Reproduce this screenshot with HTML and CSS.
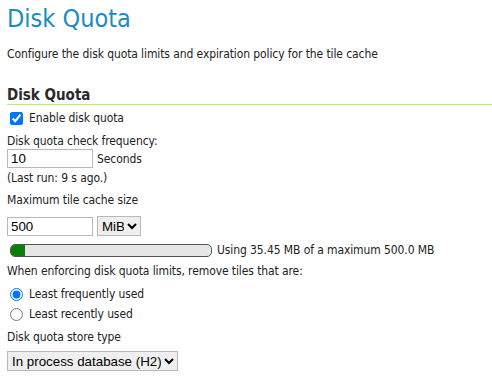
FILE: index.html
```html
<!DOCTYPE html>
<html>
<head>
<meta charset="utf-8">
<link rel="stylesheet" href="styles.css">
</head>
<body>
<div class="page">
  <h1 class="title">Disk Quota</h1>
  <p class="desc">Configure the disk quota limits and expiration policy for the tile cache</p>
  <h2 class="section">Disk Quota</h2>
  <div class="form">
    <label class="check-row"><input type="checkbox" checked> <span>Enable disk quota</span></label>
    <div class="label">Disk quota check frequency:</div>
    <div class="field-row tight"><input class="text" type="text" value="10"> <span>Seconds</span></div>
    <div class="note">(Last run: 9 s ago.)</div>
    <div class="label gap">Maximum tile cache size</div>
    <div class="field-row wide"><input class="text" type="text" value="500"> <select class="unit"><option>MiB</option></select></div>
    <div class="usage">
      <div class="bar"><div class="fill" style="width:7%"></div></div>
      <span>Using 35.45 MB of a maximum 500.0 MB</span>
    </div>
    <div class="label more">When enforcing disk quota limits, remove tiles that are:</div>
    <label class="radio-row first"><input type="radio" name="p" checked> <span>Least frequently used</span></label>
    <label class="radio-row"><input type="radio" name="p"> <span>Least recently used</span></label>
    <div class="label">Disk quota store type</div>
    <div class="field-row store-row"><select class="store"><option>In process database (H2)</option></select></div>
  </div>
</div>
</body>
</html>
```
FILE: styles.css
```css
html, body { margin: 0; padding: 0; background: #fff; }
body {
  font-family: "DejaVu Sans Condensed", "DejaVu Sans", sans-serif;
  font-size: 12px;
  color: #222;
  letter-spacing: -0.1px;
}
.page { padding: 0 0 0 7px; }
.title {
  font-size: 25px;
  font-weight: normal;
  color: #1b8bc2;
  margin: 3px 0 0;
  line-height: 32px;
  letter-spacing: 0;
}
.desc { margin: 11px 0 0; line-height: 16px; }
.section {
  font-size: 15px;
  font-weight: bold;
  color: #2a2a2a;
  margin: 24px 0 0;
  line-height: 18px;
  padding-bottom: 0;
  border-bottom: 1px solid #bfe08e;
  letter-spacing: 0;
}
.form { display: flex; flex-direction: column; align-items: flex-start; }
.check-row, .radio-row { display: flex; align-items: center; gap: 6px; height: 20px; margin-top: 2px; }
.check-row { margin-top: 3px; }
.radio-row.first { margin-top: 5px; }
.radio-row { margin-top: 0; }
.check-row input, .radio-row input { margin: 0 0 0 3px; width: 13px; height: 13px; }
.label { line-height: 16px; margin-top: 5px; }
.label.gap { margin-top: 6px; }
.label.more { margin-top: 6px; }
.field-row { display: flex; align-items: center; gap: 4px; margin-top: 4px; }
.field-row.tight { margin-top: 0; }
.field-row.wide { margin-top: 8px; }
.field-row.store-row { margin-top: 6px; }
.text {
  width: 86px; height: 19px; box-sizing: border-box;
  border: 1px solid #b8b8b8; padding: 1px 3px;
  font-family: "Liberation Sans", Arial, sans-serif; font-size: 13.33px; margin: 0;
  letter-spacing: 0;
}
select {
  height: 20px; box-sizing: border-box;
  font-family: "Liberation Sans", Arial, sans-serif; font-size: 13.33px; margin: 0;
  border: 1px solid #b8b8b8;
  letter-spacing: 0;
}
.note { line-height: 16px; margin-top: 2px; }
.unit { width: 44px; }
.usage { display: flex; align-items: center; gap: 5px; margin-top: 7px; padding-left: 3px; }
.bar {
  width: 200px; height: 11px;
  border: 1px solid #555; border-radius: 5px;
  background: #e6e6e6; overflow: hidden;
}
.fill { height: 100%; background: #0a7d0a; }
.store { width: 171px; }
```
